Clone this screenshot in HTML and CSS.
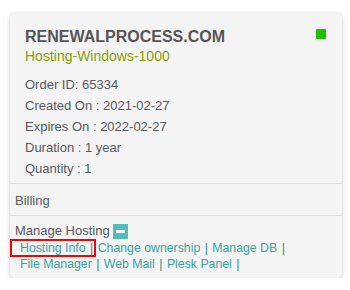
FILE: index.html
```html
<!DOCTYPE html>
<html lang="en">
<head>
    <meta charset="UTF-8">
    <meta name="viewport" content="width=device-width, initial-scale=1.0">
    <title>Hosting Order</title>
    <link rel="stylesheet" href="styles.css">
</head>
<body>

<div class="order-card">
    <div class="order-top">
        <div class="order-head">
            <div>
                <h2 class="domain">RENEWALPROCESS.COM</h2>
                <div class="plan">Hosting-Windows-1000</div>
            </div>
            <span class="status-dot"></span>
        </div>
        <ul class="order-info">
            <li>Order ID: 65334</li>
            <li>Created On : 2021-02-27</li>
            <li>Expires On : 2022-02-27</li>
            <li>Duration : 1 year</li>
            <li>Quantity : 1</li>
        </ul>
    </div>
    <div class="order-section">Billing</div>
    <div class="order-section manage">
        <div class="manage-title">Manage Hosting <span class="toggle-btn"></span></div>
        <div class="manage-links">
            <a href="#" class="active">Hosting Info</a> <span class="sep">|</span> <a href="#">Change ownership</a> <span class="sep">|</span> <a href="#">Manage DB</a> <span class="sep">|</span>
            <a href="#">File Manager</a> <span class="sep">|</span> <a href="#">Web Mail</a> <span class="sep">|</span> <a href="#">Plesk Panel</a> <span class="sep">|</span>
        </div>
    </div>
</div>

</body>
</html>
```

FILE: styles.css
```css
body {
    font-family: "Liberation Sans", Arial, sans-serif;
    background-color: #fff;
    margin: 0;
    padding: 13px 8px 0 10px;
    color: #555a62;
}
.order-card {
    width: 332px;
    height: 265px;
    box-sizing: border-box;
    background: #f4f4f4;
    border-radius: 4px;
    box-shadow: 0 1px 4px rgba(0, 0, 0, 0.22);
}
.order-top {
    padding: 14px 16px 4px 15px;
    border-bottom: 1px solid #dcdcdc;
}
.order-head {
    display: flex;
    justify-content: space-between;
    align-items: flex-start;
}
.domain {
    margin: 0;
    font-size: 16px;
    line-height: 20px;
    font-weight: bold;
    color: #555;
}
.plan {
    font-size: 14px;
    line-height: 19px;
    color: #8a9e00;
}
.status-dot {
    width: 10px;
    height: 10px;
    margin-top: 2px;
    border-radius: 1px;
    background: #1fbd00;
}
.order-info {
    list-style: none;
    margin: 8px 0 0;
    padding: 0;
    font-size: 13px;
    line-height: 21px;
}
.order-section {
    padding: 6px 5px 4px;
    font-size: 13px;
    line-height: 21px;
    border-bottom: 1px solid #dcdcdc;
}
.order-section.manage {
    border-bottom: none;
    padding: 6px 5px 6px;
}
.manage-title {
    line-height: 18px;
}
.toggle-btn {
    display: inline-block;
    width: 15px;
    height: 15px;
    vertical-align: -4px;
    background: #52bdb7;
    position: relative;
}
.toggle-btn::after {
    content: "";
    position: absolute;
    left: 3px;
    right: 3px;
    top: 6px;
    height: 3px;
    background: #fff;
}
.manage-links {
    padding-left: 5px;
    font-size: 12.3px;
    line-height: 16px;
}
.manage-links a {
    color: #36a3a3;
    text-decoration: none;
    white-space: nowrap;
}
.manage-links a.active {
    position: relative;
}
.manage-links a.active::after {
    content: "";
    position: absolute;
    top: -2px;
    bottom: -2px;
    left: -10px;
    right: -10px;
    border: 2px solid #f00;
}
.sep {
    color: #2a8c8c;
    margin: 0 1px;
}
```
